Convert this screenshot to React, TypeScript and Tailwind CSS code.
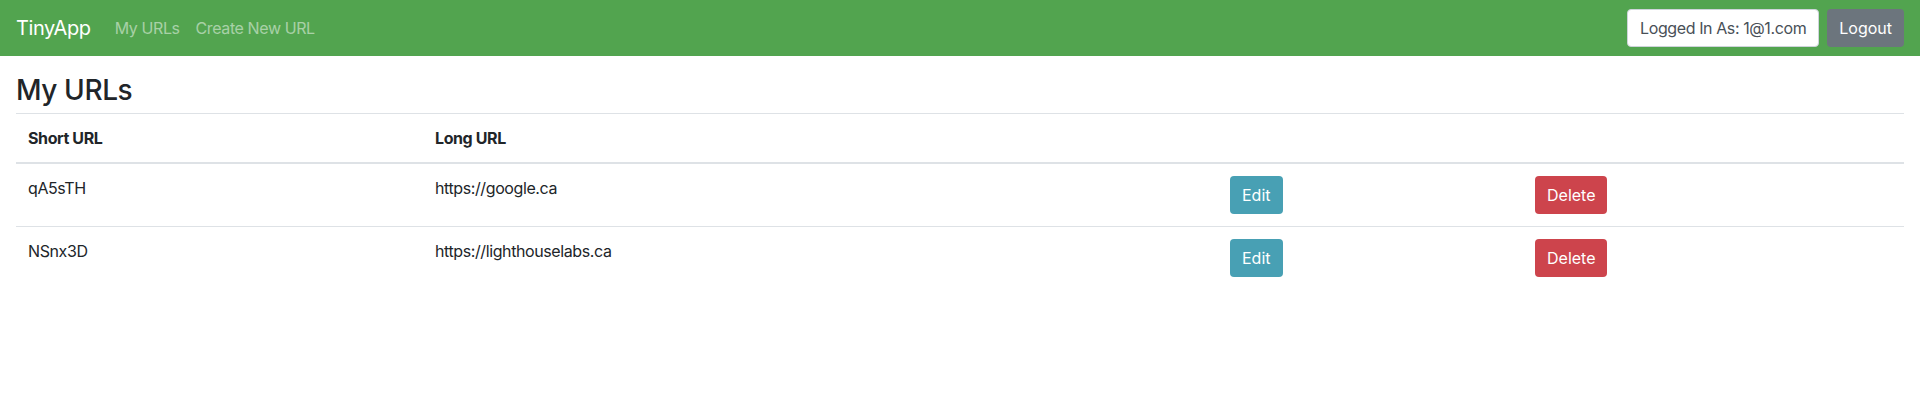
const urls = [
  { short: 'qA5sTH', long: 'https://google.ca' },
  { short: 'NSnx3D', long: 'https://lighthouselabs.ca' },
]

export default function App() {
  return (
    <div className="min-h-[416px] bg-white text-[#212529] font-['Inter','Liberation_Sans',sans-serif] text-base leading-6 tracking-[-0.025em]">
      {/* Navbar */}
      <nav className="h-14 bg-[#52a44f] px-4 flex items-center justify-between">
        <div className="flex items-center">
          <a href="#" className="text-white text-xl leading-[30px] mr-4">TinyApp</a>
          <a href="#" className="px-2 text-white/50">My URLs</a>
          <a href="#" className="px-2 text-white/50">Create New URL</a>
        </div>
        <div className="flex items-center gap-2">
          <span className="h-[38px] px-3 flex items-center bg-white border border-[#ced4da] rounded text-[#495057]">
            Logged In As: 1@1.com
          </span>
          <button className="h-[38px] px-3 rounded bg-[#6c757d] text-white tracking-normal">Logout</button>
        </div>
      </nav>

      <main className="px-4 pt-[17px]">
        <h3 className="text-[28px] leading-[34px] font-medium mb-[6px]">My URLs</h3>
        <table className="w-full border-collapse text-left">
          <thead>
            <tr className="border-t border-[#dee2e6] border-b-2">
              <th className="w-[407px] p-3 font-bold align-bottom">Short URL</th>
              <th className="w-[795px] p-3 font-bold align-bottom">Long URL</th>
              <th className="w-[305px] p-3"></th>
              <th className="p-3"></th>
            </tr>
          </thead>
          <tbody>
            {urls.map((u, i) => (
              <tr key={u.short} className={i > 0 ? 'border-t border-[#dee2e6]' : ''}>
                <td className="p-3 align-top">{u.short}</td>
                <td className="p-3 align-top">{u.long}</td>
                <td className="p-3 align-top">
                  <button className="h-[38px] px-3 rounded bg-[#48a0b4] text-white tracking-normal">Edit</button>
                </td>
                <td className="p-3 align-top">
                  <button className="h-[38px] px-3 rounded bg-[#cd444c] text-white tracking-normal">Delete</button>
                </td>
              </tr>
            ))}
          </tbody>
        </table>
      </main>
    </div>
  )
}
